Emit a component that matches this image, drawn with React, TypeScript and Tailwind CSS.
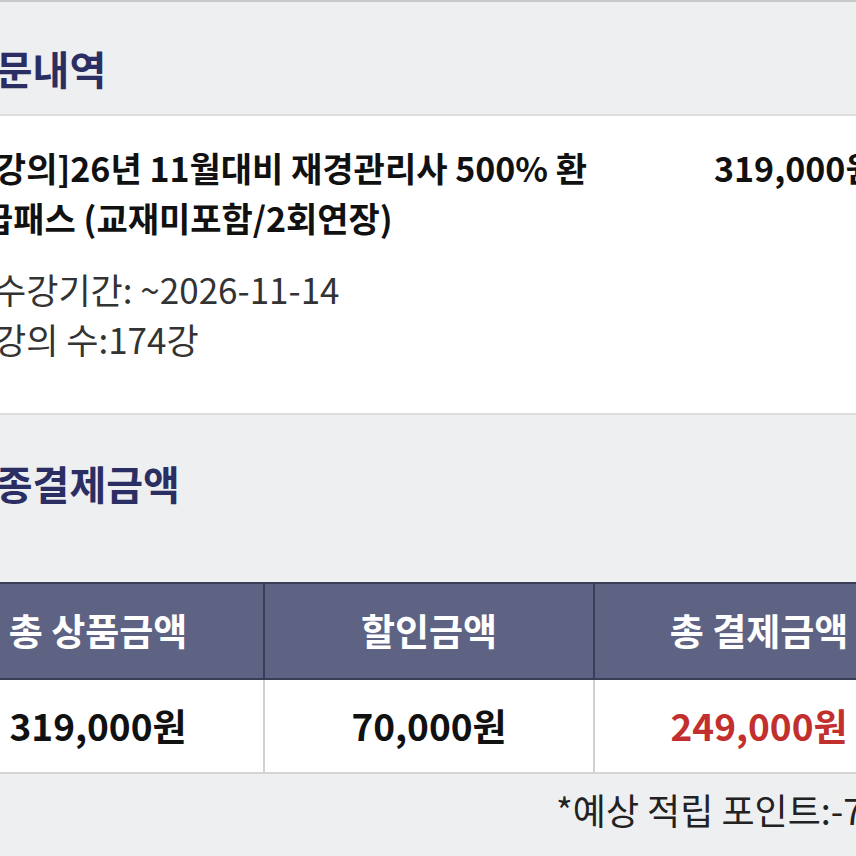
const FONT = "font-['Noto_Sans_CJK_KR','Noto_Sans',sans-serif]";

const SUMMARY = [
  { label: '총 상품금액', value: '319,000원', accent: false },
  { label: '할인금액', value: '70,000원', accent: false },
  { label: '총 결제금액', value: '249,000원', accent: true },
];

export default function App() {
  return (
    <div className={`w-[856px] h-[856px] overflow-hidden bg-[#eeeff1] ${FONT}`}>
      <div className="-ml-[67px] w-[990px]">
        <div className="h-[2px] bg-[#c9cacd]" />

        {/* 주문내역 */}
        <div className="h-[114px] pl-[26px] pt-[42px] border-b-2 border-[#dcdddf]">
          <h2 className="text-[40px] leading-[48px] font-bold text-[#2a2e63]">주문내역</h2>
        </div>

        <div className="h-[299px] bg-white border-b-2 border-[#dcdddf] pl-[49px] pt-[27px]">
          <div className="flex">
            <p className="w-[615px] text-[34px] leading-[50px] font-bold text-[#111]">
              [강의]26년 11월대비 재경관리사 500% 환급패스 (교재미포함/2회연장)
            </p>
            <p className="ml-[117px] text-[34px] leading-[50px] font-bold text-[#111] whitespace-nowrap">
              319,000원
            </p>
          </div>
          <div className="mt-[21px] pl-[12px] text-[35px] leading-[50px] text-[#333]">
            <p>수강기간: ~2026-11-14</p>
            <p>강의 수:174강</p>
          </div>
        </div>

        {/* 최종결제금액 */}
        <div className="h-[167px] pl-[26px] pt-[44px]">
          <h2 className="text-[40px] leading-[48px] font-bold text-[#2a2e63]">최종결제금액</h2>
        </div>

        <div className="border-t-2 border-[#3a3d56]">
          <div className="grid grid-cols-3 h-[96px] bg-[#5e6383] border-b-2 border-[#3a3d56]">
            {SUMMARY.map((c, i) => (
              <div
                key={c.label}
                className={`flex items-center justify-center text-[37px] font-bold text-white ${
                  i > 0 ? 'border-l-2 border-[#3a3d56]' : ''
                }`}
              >
                {c.label}
              </div>
            ))}
          </div>
          <div className="grid grid-cols-3 h-[94px] bg-white border-b-2 border-[#d3d4d6]">
            {SUMMARY.map((c, i) => (
              <div
                key={c.label}
                className={`flex items-center justify-center text-[37px] font-bold ${
                  c.accent ? 'text-[#c2302e]' : 'text-[#111]'
                } ${i > 0 ? 'border-l-2 border-[#cfd0d2]' : ''}`}
              >
                {c.value}
              </div>
            ))}
          </div>
        </div>

        <p className="pl-[623px] pt-[10px] text-[36px] leading-[50px] text-[#222] whitespace-nowrap">
          *예상 적립 포인트:-7,000P
        </p>
      </div>
    </div>
  );
}
